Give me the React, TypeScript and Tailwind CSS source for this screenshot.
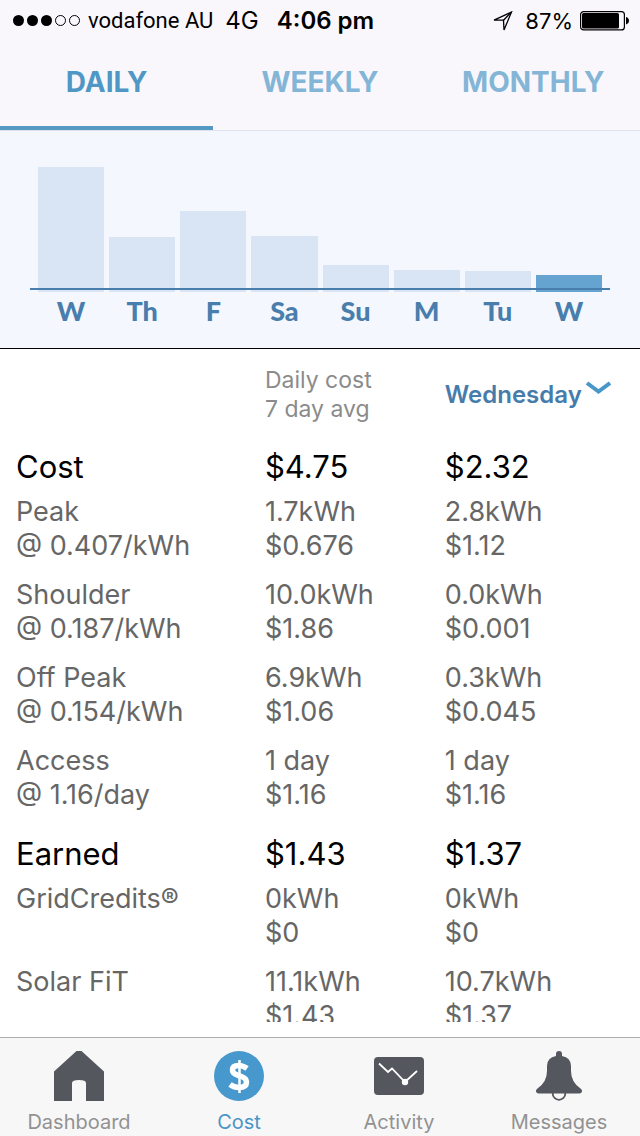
import React from 'react'

type Line = { label: string; rate?: string; avg: string[]; day: string[] }
type Section = { title: string; avg: string; day: string; lines: Line[] }

const bars = [
  { day: 'W', height: 125 },
  { day: 'Th', height: 55 },
  { day: 'F', height: 81 },
  { day: 'Sa', height: 56 },
  { day: 'Su', height: 27 },
  { day: 'M', height: 22 },
  { day: 'Tu', height: 21 },
  { day: 'W', height: 17, active: true },
]

const sections: Section[] = [
  {
    title: 'Cost',
    avg: '$4.75',
    day: '$2.32',
    lines: [
      { label: 'Peak', rate: '@ 0.407/kWh', avg: ['1.7kWh', '$0.676'], day: ['2.8kWh', '$1.12'] },
      { label: 'Shoulder', rate: '@ 0.187/kWh', avg: ['10.0kWh', '$1.86'], day: ['0.0kWh', '$0.001'] },
      { label: 'Off Peak', rate: '@ 0.154/kWh', avg: ['6.9kWh', '$1.06'], day: ['0.3kWh', '$0.045'] },
      { label: 'Access', rate: '@ 1.16/day', avg: ['1 day', '$1.16'], day: ['1 day', '$1.16'] },
    ],
  },
  {
    title: 'Earned',
    avg: '$1.43',
    day: '$1.37',
    lines: [
      { label: 'GridCredits®', avg: ['0kWh', '$0'], day: ['0kWh', '$0'] },
      { label: 'Solar FiT', avg: ['11.1kWh', '$1.43'], day: ['10.7kWh', '$1.37'] },
    ],
  },
]

const StatusBar: React.FC = () => (
  <div className="flex h-[41px] items-center justify-between pl-[13px] pr-[11px] text-[22px] leading-10 text-black">
    <div className="flex items-center">
      <div className="mr-2 flex gap-[3px]">
        {[1, 2, 3].map((n) => (
          <span key={n} className="size-[11px] rounded-full bg-black" />
        ))}
        {[4, 5].map((n) => (
          <span key={n} className="size-[11px] rounded-full border border-black" />
        ))}
      </div>
      <span className="mr-3 font-[Roboto,sans-serif]">vodafone AU</span>
      <span className="mr-[18px] text-2xl">4G</span>
      <span className="text-2xl font-semibold">4:06 pm</span>
    </div>
    <div className="flex items-center">
      <svg className="mr-3 h-5 w-5" viewBox="0 0 20 20" fill="none" stroke="black" strokeWidth="1.3">
        <path d="M18.5 1 L1 9.2 L10.5 9.2 L11 19 Z" />
        <path d="M18.5 1 L10.5 9.2" />
      </svg>
      <span className="mr-[7px]">87%</span>
      <svg className="h-5 w-[49px]" viewBox="0 0 49 20">
        <rect x="0.6" y="0.6" width="43.8" height="18.3" rx="3" fill="none" stroke="black" strokeWidth="1.2" />
        <rect x="2" y="2" width="37" height="15.5" rx="1.5" fill="black" />
        <path d="M46 6 Q49 7 49 9.8 Q49 12.5 46 13.5 Z" fill="black" />
      </svg>
    </div>
  </div>
)

const Tabs: React.FC = () => (
  <nav className="flex h-[90px] border-b border-[#dfe3ec] text-[28px] font-bold text-[#83b5d7]">
    <button className="flex-1 border-b-4 border-[#5598c2] pb-1 text-[#4f97c4]">DAILY</button>
    <button className="flex-1 border-b-4 border-transparent pb-1">WEEKLY</button>
    <button className="flex-1 border-b-4 border-transparent pb-1">MONTHLY</button>
  </nav>
)

const Chart: React.FC = () => (
  <section className="border-b border-black bg-[#f4f7fe] px-[30px] pb-[18px] pt-9">
    <div className="relative flex h-[125px] items-end gap-[5px] px-2">
      {bars.map((bar, i) => (
        <div
          key={i}
          className={bar.active ? 'flex-1 bg-[#65a3d1]' : 'flex-1 bg-[#d9e4f5]'}
          style={{ height: bar.height }}
        />
      ))}
      <div className="absolute inset-x-0 bottom-[2px] h-[2px] bg-[#487dac]" />
    </div>
    <div className="flex gap-[5px] px-2 text-center font-[Lato,sans-serif] text-[27px] font-black leading-[38px] text-[#497eac]">
      {bars.map((bar, i) => (
        <span key={i} className="flex-1">
          {bar.day}
        </span>
      ))}
    </div>
  </section>
)

const CostTable: React.FC = () => (
  <table className="w-full table-fixed text-left">
    <colgroup>
      <col className="w-[41.4%]" />
      <col className="w-[28.1%]" />
      <col />
    </colgroup>
    <thead>
      <tr className="h-[91px]">
        <td />
        <th scope="col" className="text-[23px] font-normal leading-[29px] text-[#8b8b8b]">
          Daily cost
          <br />7 day avg
        </th>
        <th scope="col" className="font-semibold text-[#467cab]">
          <div className="flex items-center">
            <select aria-label="Day" className="appearance-none bg-transparent text-2xl">
              <option>Wednesday</option>
              <option>Tuesday</option>
              <option>Monday</option>
              <option>Sunday</option>
            </select>
            <svg className="mb-3.5 ml-[3px] h-4 w-[26px]" viewBox="0 0 26 16" fill="none" stroke="#4996c9" strokeWidth="4">
              <path d="M2 3 L13.5 11.5 L25 3" />
            </svg>
          </div>
        </th>
      </tr>
    </thead>
    {sections.map((section) => (
      <tbody key={section.title} className="text-[27px] leading-[34px] text-[#666]">
        <tr className="h-[55px] text-[31px] text-black">
          <th scope="row" className="pb-0.5 pl-4 font-normal">{section.title}</th>
          <td className="pb-0.5">{section.avg}</td>
          <td className="pb-0.5">{section.day}</td>
        </tr>
        {section.lines.map((line) => (
          <tr key={line.label}>
            <th scope="row" className="pb-[15px] pl-4 align-top font-normal">
              {line.label}
              <br />
              {line.rate}
            </th>
            <td className="pb-[15px] align-top">
              {line.avg[0]}
              <br />
              {line.avg[1]}
            </td>
            <td className="pb-[15px] align-top">
              {line.day[0]}
              <br />
              {line.day[1]}
            </td>
          </tr>
        ))}
      </tbody>
    ))}
  </table>
)

const HomeIcon: React.FC = () => (
  <svg className="size-[50px]" viewBox="0 0 50 50" fill="#54575e">
    <path d="M22.5 0 H27.5 L50 20.5 V50 H32 V32 Q32 29 25 29 Q18 29 18 32 V50 H0 V20.5 Z" />
  </svg>
)

const CostIcon: React.FC = () => (
  <svg className="size-[50px]" viewBox="0 0 50 50" fill="none">
    <circle cx="25" cy="25" r="25" fill="#4798cd" />
    <path
      d="M33 17.5 Q29 14.5 24.5 14.5 Q18.5 14.5 18.5 19 Q18.5 22.5 24 24.3 L27.5 25.5 Q32.5 27.3 32.5 31 Q32.5 36.5 25 36.5 Q20 36.5 16 33.5"
      stroke="white"
      strokeWidth="5.5"
    />
    <path d="M25.5 9 V42" stroke="white" strokeWidth="2.5" />
  </svg>
)

const ActivityIcon: React.FC = () => (
  <svg className="size-[50px]" viewBox="0 0 50 50" fill="none">
    <rect y="6" width="50" height="38" rx="4" fill="#54575e" />
    <path d="M5 12.5 L14 21 L18 17.5 L31 31 L43 20" stroke="white" strokeWidth="1.8" />
    <circle cx="31" cy="31" r="3.2" fill="white" />
  </svg>
)

const BellIcon: React.FC = () => (
  <svg className="size-[50px]" viewBox="0 0 50 50" fill="none">
    <circle cx="25" cy="42.5" r="6.3" stroke="#54575e" strokeWidth="1.8" />
    <path
      d="M22 5 V3 Q22 0 25 0 Q28 0 28 3 V5 Q37 6.5 37 15 V20 Q37 31 46.5 37.5 Q49 39.5 47.5 41.5 Q46.8 42.5 45 42.5 H5 Q3.2 42.5 2.5 41.5 Q1 39.5 3.5 37.5 Q13 31 13 20 V15 Q13 6.5 22 5 Z"
      fill="#54575e"
    />
  </svg>
)

const navItems = [
  { name: 'Dashboard', Icon: HomeIcon },
  { name: 'Cost', Icon: CostIcon },
  { name: 'Activity', Icon: ActivityIcon },
  { name: 'Messages', Icon: BellIcon },
]

const BottomNav: React.FC = () => (
  <nav className="grid grid-cols-4 border-t border-[#adadad] bg-[#f7f7f8] pb-0.5 pt-[13px] text-xl leading-6 text-[#929292]">
    {navItems.map(({ name, Icon }) => (
      <a
        key={name}
        href="#"
        className={
          name === 'Cost'
            ? 'flex flex-col items-center gap-[9px] pr-0.5 text-[#4a95c5]'
            : 'flex flex-col items-center gap-[9px] pr-0.5'
        }
      >
        <Icon />
        {name}
      </a>
    ))}
  </nav>
)

const App: React.FC = () => {
  return (
    <div className="flex h-screen flex-col bg-white font-[Inter,sans-serif]">
      <header className="bg-[#faf7fc]">
        <StatusBar />
        <Tabs />
      </header>
      <Chart />
      <main className="mb-[15px] min-h-0 flex-1 overflow-hidden">
        <CostTable />
      </main>
      <BottomNav />
    </div>
  )
}

export default App
